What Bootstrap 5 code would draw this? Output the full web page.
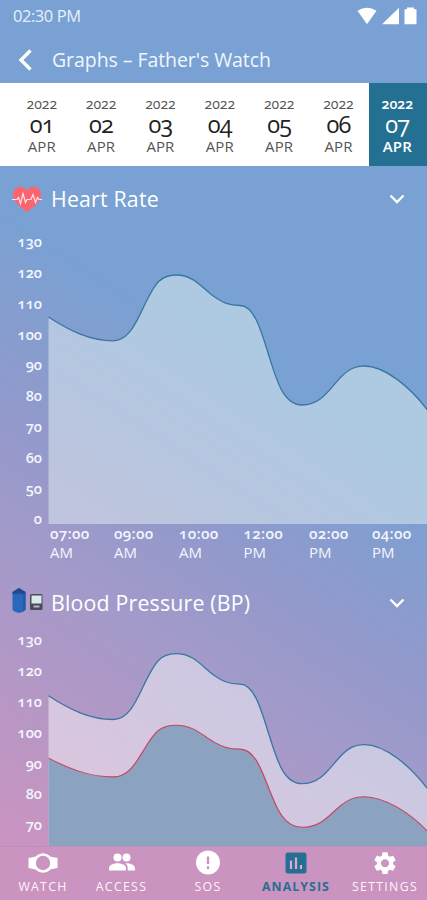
<!DOCTYPE html>
<html lang="en">
<head>
<meta charset="utf-8">
<meta name="viewport" content="width=device-width, initial-scale=1">
<title>Graphs – Father's Watch</title>
<link href="https://cdn.jsdelivr.net/npm/bootstrap@5.3.0/dist/css/bootstrap.min.css" rel="stylesheet">
<style>
  body { font-family: "Open Sans", "Noto Sans", sans-serif; background: #79a1d3; }
  svg { display: block; }
  .app { height: 900px; background: linear-gradient(213deg, #79a1d3 41%, #9299cb 58%, #a19aca 68%, #b098c6 78%, #cb94c0 95%); }
  .status-bar { height: 32px; padding: 0 10px 0 13px; }
  .clock { font-size: 16.5px; letter-spacing: -.45px; color: #e6f0fc; line-height: 30px; }
  .title-bar { height: 51px; padding: 4px 0 0 18px; }
  .title-bar h1 { font-size: 19.5px; letter-spacing: -.07px; margin-left: 20px; line-height: 30px; color: #f1f6fd; }
  .days { height: 83px; padding-left: 12.600px; background: #fff; color: #222; font-variant-numeric: oldstyle-nums; }
  .day { width: 59.4px; line-height: 1; padding-top: 13px; }
  .day:last-child { width: 58.4px; background: #247093; color: #fff; font-weight: 600; }
  .day-year { font-size: 14px; line-height: 16px; }
  .day-num { font-size: 23.5px; line-height: 24px; letter-spacing: -.8px; }
  .day-month { font-size: 15px; line-height: 20px; letter-spacing: .1px; }
  .day-year, .day-num, .day-month { margin-left: -1px; }
  .day:last-child .day-num { font-weight: 500; }
  .day:not(:last-child) .day-year, .day:not(:last-child) .day-month { color: #555; }
  .section-head { height: 65px; padding: 0 22px 0 11px; }
  .section-head h2 { font-size: 21.3px; letter-spacing: .2px; margin-left: 8px; line-height: 30px; padding-top: 1px; }
  .axis { font-size: 14.5px; font-weight: 600; fill: #f3f5fd; font-variant-numeric: oldstyle-nums; }
  .axis-times { font-size: 15px; letter-spacing: .35px; }
  .axis-halves { font-size: 15px; font-weight: 500; }
  .curve { fill: none; stroke: #39779f; stroke-width: 1.3; vector-effect: non-scaling-stroke; }
  .curve-low { stroke: #c8475f; }
  .tabs { height: 54px; background: #cb93c0; border-top: 1px solid #bd8fbd; }
  .tab-item { font-size: 12.3px; font-weight: 500; letter-spacing: 1.3px; color: #fff4fc; line-height: 16px; padding-top: 3px; }
  .tab-item svg { margin-bottom: 3px; }
  .tab-item.current { color: #247093; font-weight: 700; letter-spacing: 1.1px; }
  .tab-settings { margin-left: 10px; }
</style>
</head>
<body>
<main class="app d-flex flex-column overflow-hidden text-white">
  <div class="status-bar d-flex justify-content-between align-items-center flex-shrink-0">
    <span class="clock">02:30 PM</span>
    <svg width="60" height="18" viewBox="0 0 60 18" fill="#fff"><path d="M0.5 3.8Q10 -2.5 19.5 3.8L10.5 16.4Q10 17 9.5 16.4Z"/><path d="M25 17.3 42 0.8V17.3Z"/><path d="M48 2.2H50V.5H57V2.2H59.5V17.3H47.5V2.2Z"/></svg>
  </div>
  <header class="title-bar d-flex align-items-center flex-shrink-0">
    <svg width="14" height="22" viewBox="0 0 14 22" fill="none" stroke="#fff" stroke-width="3.4"><path d="M12.5 1.5 3 11l9.500 9.500"/></svg>
    <h1 class="fw-normal mb-0">Graphs – Father's Watch</h1>
  </header>
  <nav class="days d-flex text-center flex-shrink-0">
    <div class="day"><div class="day-year">2022</div><div class="day-num">01</div><div class="day-month">APR</div></div>
    <div class="day"><div class="day-year">2022</div><div class="day-num">02</div><div class="day-month">APR</div></div>
    <div class="day"><div class="day-year">2022</div><div class="day-num">03</div><div class="day-month">APR</div></div>
    <div class="day"><div class="day-year">2022</div><div class="day-num">04</div><div class="day-month">APR</div></div>
    <div class="day"><div class="day-year">2022</div><div class="day-num">05</div><div class="day-month">APR</div></div>
    <div class="day"><div class="day-year">2022</div><div class="day-num">06</div><div class="day-month">APR</div></div>
    <div class="day"><div class="day-year">2022</div><div class="day-num">07</div><div class="day-month">APR</div></div>
  </nav>
  <section class="flex-shrink-0">
    <div class="section-head d-flex align-items-center">
      <svg width="32" height="28" viewBox="0 0 32 28"><path d="M16 27C10 22 2 17.500 2 9.500 2 1 12.500-1 16 5.500 19.500-1 30 1 30 9.500 30 17.500 22 22 16 27Z" fill="#fb6570"/><path d="M1 14.500H6l1.500-2 2 6 2.500-10 2.500 9 1.500-3h4l2-5 2.500 8 2-5 1.500 2h3" fill="none" stroke="#fde3ea" stroke-width="1.200"/></svg>
      <h2 class="fw-normal mb-0">Heart Rate</h2>
      <svg class="ms-auto" width="16" height="10" viewBox="0 0 16 10" fill="none" stroke="#fff" stroke-width="2.400"><path d="m1.500 1.500 6.500 6.500 6.500-6.500"/></svg>
    </div>
    <svg class="overflow-visible" width="427" height="339" viewBox="0 231 427 339">
      <defs>
        <path id="trend" d="M48.500 317C70 331 90 340.800 113 340.800 130 340.800 137 320 146 302 155 284 160 275 176 275 194 275 202 288 214 296.500 222 302 228 305.500 240 305.500 255 305.500 262 334 269 356 277 382 284 405 302 405 322 405 330 388 341 377 349 369 355 366 364 366 385 366 410 387 427.500 410"/>
        <path id="trend-area" d="M48.500 317C70 331 90 340.800 113 340.800 130 340.800 137 320 146 302 155 284 160 275 176 275 194 275 202 288 214 296.500 222 302 228 305.500 240 305.500 255 305.500 262 334 269 356 277 382 284 405 302 405 322 405 330 388 341 377 349 369 355 366 364 366 385 366 410 387 427.500 410V524H48.500Z"/>
        <clipPath id="plot"><rect x="0" y="600" width="427" height="246"/></clipPath>
      </defs>
      <use href="#trend-area" fill="#e6f3f3" fill-opacity=".49"/>
      <use href="#trend" class="curve"/>
      <g class="axis" text-anchor="end">
        <text x="42" y="247">130</text><text x="42" y="278">120</text><text x="42" y="308.500">110</text><text x="42" y="339.500">100</text><text x="42" y="370">90</text><text x="42" y="401">80</text><text x="42" y="432">70</text><text x="42" y="462.500">60</text><text x="42" y="493.500">50</text><text x="42" y="524">0</text>
      </g>
      <g class="axis axis-times">
        <text x="50" y="539">07:00</text><text x="114" y="539">09:00</text><text x="179" y="539">10:00</text><text x="243.500" y="539">12:00</text><text x="309" y="539">02:00</text><text x="372" y="539">04:00</text>
      </g>
      <g class="axis axis-halves">
        <text x="50" y="558">AM</text><text x="114" y="558">AM</text><text x="179" y="558">AM</text><text x="243.500" y="558">PM</text><text x="309" y="558">PM</text><text x="372" y="558">PM</text>
      </g>
    </svg>
  </section>
  <section class="flex-shrink-0">
    <div class="section-head d-flex align-items-center">
      <svg width="32" height="32" viewBox="0 0 32 32"><path d="M1.500 5 8 1l6.500 4v18q-3 3-6.500 3T1.500 23Z" fill="#2869bd"/><path d="M1.500 5 8 1l6.500 4v3L9 6.500 1.500 7Z" fill="#234b8c"/><path d="M12 7v17l2.500-1.500V5Z" fill="#245aa5"/><rect x="19" y="7" width="12.500" height="16" rx="1.500" fill="#4b4a5d"/><rect x="20.500" y="8.500" width="10" height="8" fill="#dbe9ec"/><path d="M22.500 19.500h6" stroke="#b6b5c4" stroke-width="2"/></svg>
      <h2 class="fw-normal mb-0">Blood Pressure (BP)</h2>
      <svg class="ms-auto" width="16" height="10" viewBox="0 0 16 10" fill="none" stroke="#fff" stroke-width="2.400"><path d="m1.500 1.500 6.500 6.500 6.500-6.500"/></svg>
    </div>
    <svg class="overflow-visible" width="427" height="211" viewBox="0 635 427 211">
      <g clip-path="url(#plot)">
        <g transform="translate(0 378.700)"><use href="#trend-area" fill="#fff" fill-opacity=".46"/><use href="#trend" class="curve"/></g>
        <g transform="translate(0 509) scale(1 .786)"><use href="#trend-area" fill="#8ba2c0"/><use href="#trend" class="curve curve-low"/></g>
      </g>
      <g class="axis" text-anchor="end">
        <text x="42" y="645">130</text><text x="42" y="676">120</text><text x="42" y="707">110</text><text x="42" y="737.500">100</text><text x="42" y="768.500">90</text><text x="42" y="798.500">80</text><text x="42" y="830">70</text>
      </g>
    </svg>
  </section>
  <nav class="tabs d-flex text-center flex-shrink-0">
    <div class="tab-item d-flex flex-column align-items-center" style="width:86px">
      <svg width="30" height="26" viewBox="0 0 30 26"><path d="M.5 8 8 6.500v13L.5 18ZM29.500 8 22 6.500v13l7.500-1.500Z" fill="#fff"/><circle cx="15" cy="13" r="8.500" fill="none" stroke="#fff" stroke-width="2.600"/></svg>
      <span>WATCH</span>
    </div>
    <div class="tab-item d-flex flex-column align-items-center" style="width:71px">
      <svg width="28" height="26" viewBox="0 0 28 26" fill="#fff"><circle cx="9.500" cy="7.500" r="4"/><circle cx="18.500" cy="7.500" r="4"/><path d="M1 20.500v-2.500c0-3.200 5-4.800 8.500-4.800s8.500 1.600 8.500 4.800v2.500ZM18.500 13.200c3.500 0 8.500 1.600 8.500 4.800v2.500h-7.300v-2.500c0-2-.9-3.500-2.300-4.700Z"/></svg>
      <span>ACCESS</span>
    </div>
    <div class="tab-item d-flex flex-column align-items-center" style="width:102px">
      <svg width="26" height="26" viewBox="0 0 26 26"><circle cx="13" cy="12.500" r="12" fill="#fff"/><path d="M13 6.500v7.500M13 16.300v2.700" stroke="#cb93c0" stroke-width="2.400"/></svg>
      <span>SOS</span>
    </div>
    <div class="tab-item current d-flex flex-column align-items-center" style="width:74px">
      <svg width="22" height="26" viewBox="0 0 22 26"><rect x=".5" y="2.500" width="21" height="21" rx="2.500" fill="#247093"/><path d="M6 10.500v8.500M11 7.500v11.500M16 15v4" stroke="#e1a9d1" stroke-width="2.200"/></svg>
      <span>ANALYSIS</span>
    </div>
    <div class="tab-item tab-settings d-flex flex-column align-items-center" style="width:84px">
      <svg width="26" height="26" viewBox="0.500 0.300 23 23"><path fill="#fff" d="M19.140 12.940c.04-.3.060-.61.060-.94 0-.32-.02-.64-.07-.94l2.030-1.580c.18-.14.230-.41.120-.61l-1.920-3.320c-.12-.22-.37-.29-.59-.22l-2.390.96c-.5-.38-1.030-.7-1.620-.94l-.36-2.540c-.04-.24-.24-.41-.48-.41h-3.840c-.24 0-.43.170-.47.410l-.36 2.540c-.59.240-1.130.570-1.620.94l-2.390-.96c-.22-.08-.47 0-.59.220L2.740 8.870c-.12.210-.08.470.120.610l2.030 1.580c-.05.300-.09.630-.09.940s.02.640.070.940l-2.030 1.580c-.18.140-.23.410-.12.610l1.920 3.320c.12.220.37.290.59.220l2.390-.96c.5.380 1.030.700 1.620.940l.36 2.540c.05.240.24.410.48.410h3.840c.24 0 .44-.17.47-.41l.36-2.540c.59-.24 1.130-.56 1.620-.94l2.390.96c.22.080.47 0 .59-.22l1.920-3.320c.12-.22.070-.47-.12-.61zM12 15.600c-1.980 0-3.600-1.620-3.600-3.600s1.620-3.600 3.600-3.600 3.600 1.620 3.600 3.600-1.620 3.600-3.600 3.600"/></svg>
      <span>SETTINGS</span>
    </div>
  </nav>
</main>
<script src="https://cdn.jsdelivr.net/npm/bootstrap@5.3.0/dist/js/bootstrap.bundle.min.js"></script>
</body>
</html>
